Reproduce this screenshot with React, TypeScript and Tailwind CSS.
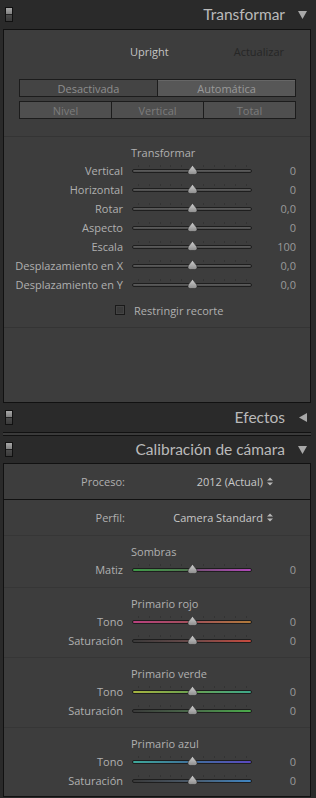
import React from "react";

const FONT = { fontFamily: '"Open Sans", "Liberation Sans", sans-serif' };

function Toggle() {
  return (
    <div className="flex h-[15px] w-[8px] flex-col border border-[#111]">
      <div className="h-[6px] bg-[linear-gradient(#a8a8a8,#808080)]" />
      <div className="flex-1 bg-[linear-gradient(#4a4a4a,#3a3a3a)] border-t border-[#222]" />
    </div>
  );
}

function Header({ title, open, h }: { title: string; open: boolean; h: string }) {
  return (
    <div className={`flex items-center bg-[#2a2a2a] pl-[5px] pr-[9px] ${h}`}>
      <Toggle />
      <div className="flex-1" />
      <span className="font-['Lato',sans-serif] text-[15.5px] leading-none text-[#bababa]">{title}</span>
      <span className="ml-[13px] flex w-[9px] justify-center">
        {open ? (
          <svg width="9" height="8" viewBox="0 0 9 8">
            <path d="M0 0 L9 0 L4.5 8 Z" fill="#a8a8a8" />
          </svg>
        ) : (
          <svg width="8" height="9" viewBox="0 0 8 9">
            <path d="M8 0 L8 9 L0 4.5 Z" fill="#a8a8a8" />
          </svg>
        )}
      </span>
    </div>
  );
}

function Thumb() {
  return (
    <svg className="absolute left-[55px] top-[4px]" width="11" height="10" viewBox="0 0 11 10">
      <defs>
        <linearGradient id="tg" x1="0" y1="0" x2="0" y2="1">
          <stop offset="0" stopColor="#d0d0d0" />
          <stop offset="1" stopColor="#8c8c8c" />
        </linearGradient>
      </defs>
      <path
        d="M5.5 0.3 L9.8 5.8 Q10.8 9.5 7.5 9.6 L3.5 9.6 Q0.2 9.5 1.2 5.8 Z"
        fill="url(#tg)"
        stroke="#2a2a2a"
        strokeWidth="0.6"
      />
    </svg>
  );
}

const TICKS = [0, 1, 2, 3, 4, 5, 6, 7, 8, 9, 10];

function Slider({
  label,
  value,
  track = "bg-[linear-gradient(#5e5e5e,#4c4c4c)]",
}: {
  label: string;
  value: string;
  track?: string;
}) {
  return (
    <div className="flex h-[19px] items-center text-[11px]">
      <div className="w-[119px] text-right leading-none text-[#b0b0b0]">{label}</div>
      <div className="relative ml-[9px] h-[19px] w-[120px]">
        {TICKS.map((i) => (
          <div
            key={i}
            className="absolute top-[4px] h-[2px] w-[1px] bg-[#333]"
            style={{ left: 6 + i * 10.8 }}
          />
        ))}
        <div className={`absolute left-0 top-[8px] h-[4px] w-[120px] rounded-full border border-[#1e1e1e] ${track}`} />
        <Thumb />
      </div>
      <div className="w-[44px] text-right leading-none text-[#9a9a9a]">{value}</div>
    </div>
  );
}

function SubHead({ children }: { children: React.ReactNode }) {
  return (
    <div className="flex h-[18px] items-center pl-[127px] text-[11px] leading-none text-[#b0b0b0]">
      {children}
    </div>
  );
}

function UpDown() {
  return (
    <svg className="ml-[4px]" width="6" height="9" viewBox="0 0 6 9">
      <path d="M0 3.5 L3 0.5 L6 3.5 Z M0 5.5 L3 8.5 L6 5.5 Z" fill="#b8b8b8" />
    </svg>
  );
}

export default function App() {
  return (
    <div className="flex h-[798px] w-[316px] flex-col bg-[#2a2a2a]" style={FONT}>
      <Header title="Transformar" open h="h-[29px]" />
      <div className="mx-[3px] flex h-[374px] w-[308px] flex-col border border-[#111] bg-[#3d3d3d]">
        <div className="flex h-[43px] items-center text-[11px] leading-none">
          <span className="ml-[126px] text-[#c4c4c4]">Upright</span>
          <span className="ml-[65px] text-[#262626]">Actualizar</span>
        </div>
        <div className="ml-[15px] mt-[6px] flex h-[18px] w-[277px] border border-[#1c1c1c] text-[11px] leading-none">
          <div className="flex w-[138px] items-center justify-center border-r border-[#1c1c1c] bg-[#444] text-[#8e8e8e]">
            Desactivada
          </div>
          <div className="flex flex-1 items-center justify-center border-t border-[#666] bg-[#575757] text-[#999]">
            Automática
          </div>
        </div>
        <div className="ml-[15px] mt-[4px] flex h-[18px] w-[277px] border border-[#1c1c1c] text-[11px] leading-none text-[#7c7c7c]">
          <div className="flex w-[92px] items-center justify-center border-r border-[#1c1c1c] bg-[#4f4f4f]">Nivel</div>
          <div className="flex w-[92px] items-center justify-center border-r border-[#1c1c1c] bg-[#4f4f4f]">Vertical</div>
          <div className="flex flex-1 items-center justify-center bg-[#4f4f4f]">Total</div>
        </div>
        <div className="mt-[17px] h-[1px] bg-[#343434]" />
        <div className="mt-[6px]">
          <SubHead>Transformar</SubHead>
        </div>
        <Slider label="Vertical" value="0" />
        <Slider label="Horizontal" value="0" />
        <Slider label="Rotar" value="0,0" />
        <Slider label="Aspecto" value="0" />
        <Slider label="Escala" value="100" />
        <Slider label="Desplazamiento en X" value="0,0" />
        <Slider label="Desplazamiento en Y" value="0,0" />
        <div className="mt-[6px] flex h-[20px] items-center text-[11px] leading-none">
          <div className="ml-[111px] h-[10px] w-[10px] border border-[#1a1a1a] bg-[#3a3a3a] shadow-[inset_0_0_0_1px_#444]" />
          <span className="ml-[9px] text-[#b0b0b0]">Restringir recorte</span>
        </div>
        <div className="mt-[7px] h-[1px] bg-[#343434]" />
      </div>
      <Header title="Efectos" open={false} h="h-[29px]" />
      <div className="mx-[3px] h-[4px] w-[308px] border-y border-[#111] bg-[#3a3a3a]" />
      <Header title="Calibración de cámara" open h="h-[27px]" />
      <div className="mx-[3px] flex h-[334px] w-[308px] flex-col border border-[#111] bg-[#3d3d3d]">
        <div className="flex h-[36px] items-center border-b border-[#111] text-[11px] leading-none">
          <div className="w-[121px] text-right text-[#b0b0b0]">Proceso:</div>
          <div className="flex w-[148px] items-center justify-end text-[#c8c8c8]">
            2012 (Actual)
            <UpDown />
          </div>
        </div>
        <div className="flex h-[36px] items-center border-b border-[#363636] text-[11px] leading-none">
          <div className="w-[121px] text-right text-[#b0b0b0]">Perfil:</div>
          <div className="flex w-[148px] items-center justify-end text-[#c8c8c8]">
            Camera Standard
            <UpDown />
          </div>
        </div>
        <div className="border-b border-[#363636] pb-[8px] pt-[6px]">
          <SubHead>Sombras</SubHead>
          <Slider
            label="Matiz"
            value="0"
            track="bg-[linear-gradient(to_right,#3f9a48,#4f7a4f_45%,#7a4f7a_55%,#b048b8)]"
          />
        </div>
        <div className="border-b border-[#363636] pb-[7px] pt-[6px]">
          <SubHead>Primario rojo</SubHead>
          <Slider
            label="Tono"
            value="0"
            track="bg-[linear-gradient(to_right,#b8407e,#a0505a_50%,#b07a3a)]"
          />
          <Slider
            label="Saturación"
            value="0"
            track="bg-[linear-gradient(to_right,#3a3a3a,#6a4a4a_50%,#c84a3e)]"
          />
        </div>
        <div className="border-b border-[#363636] pb-[7px] pt-[6px]">
          <SubHead>Primario verde</SubHead>
          <Slider
            label="Tono"
            value="0"
            track="bg-[linear-gradient(to_right,#a6b440,#6aa050_50%,#3ea88a)]"
          />
          <Slider
            label="Saturación"
            value="0"
            track="bg-[linear-gradient(to_right,#3a3a3a,#4a6a4a_50%,#4aac4a)]"
          />
        </div>
        <div className="pt-[6px]">
          <SubHead>Primario azul</SubHead>
          <Slider
            label="Tono"
            value="0"
            track="bg-[linear-gradient(to_right,#3ea89a,#3f6f9a_50%,#5a48c0)]"
          />
          <Slider
            label="Saturación"
            value="0"
            track="bg-[linear-gradient(to_right,#3a3a3a,#4a5a6a_50%,#3f86c4)]"
          />
        </div>
      </div>
    </div>
  );
}
